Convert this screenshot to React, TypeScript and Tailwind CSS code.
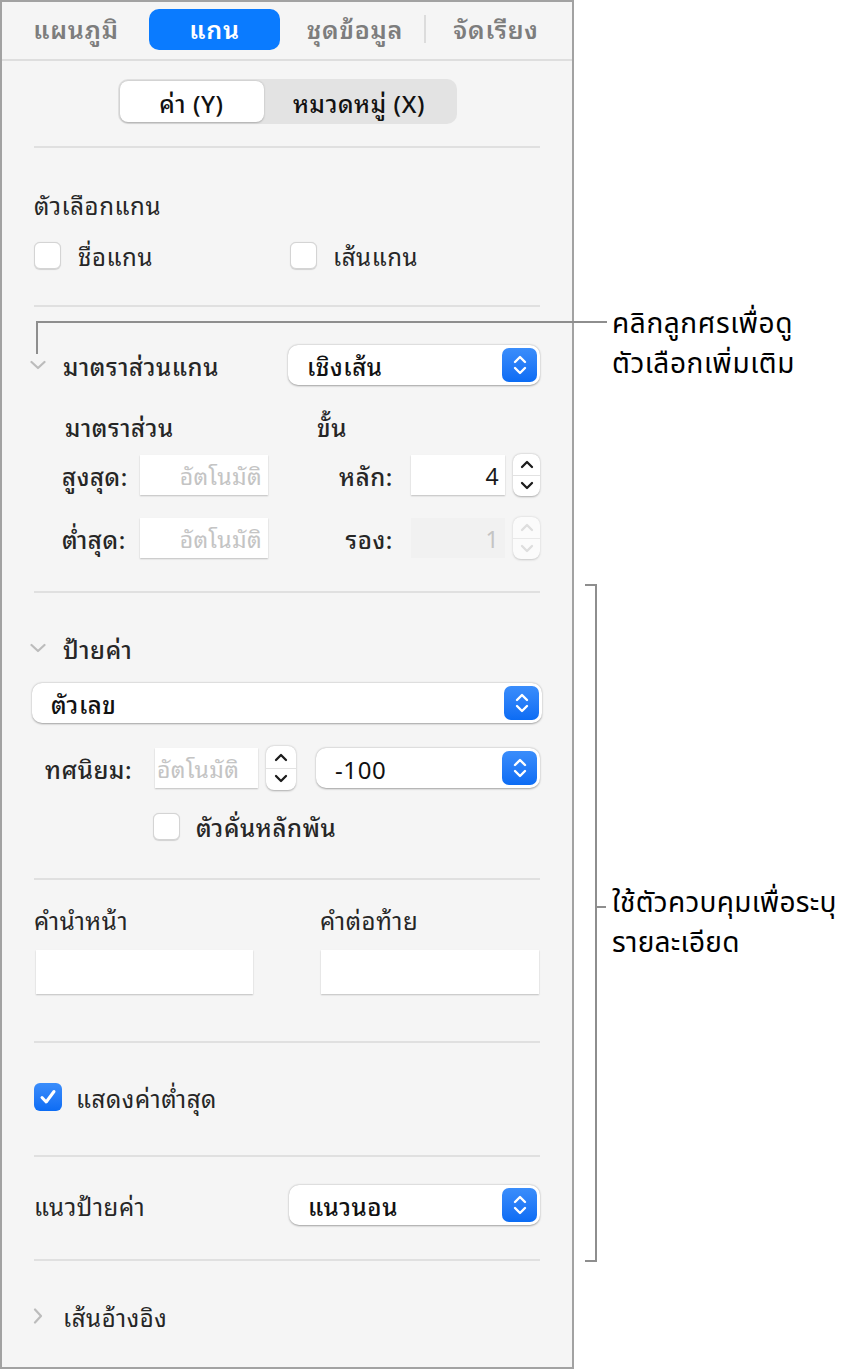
import React from 'react'

const THAI = "font-['Noto_Sans_Thai_Looped','Noto_Sans_Thai','Loma','Garuda','Noto_Sans',sans-serif]"
const THAI_NOTE = "font-['Noto_Sans_Thai','Noto_Sans_Thai_Looped','Garuda','Noto_Sans',sans-serif]"

function Divider({ className = '' }: { className?: string }) {
  return <div className={`mx-[32px] h-[2px] bg-[#e0e0e0] ${className}`} />
}

function Disclosure({ open = true }: { open?: boolean }) {
  return (
    <svg width="16" height="16" viewBox="0 0 16 16" className="shrink-0">
      {open ? (
        <path d="M1.5 5 L8 11 L14.5 5" fill="none" stroke="#bcbcbc" strokeWidth="2.2" strokeLinecap="round" strokeLinejoin="round" />
      ) : (
        <path d="M5 1.5 L11 8 L5 14.5" fill="none" stroke="#bcbcbc" strokeWidth="2.2" strokeLinecap="round" strokeLinejoin="round" />
      )}
    </svg>
  )
}

function BlueArrows() {
  return (
    <div className="flex h-[34px] w-[35px] items-center justify-center rounded-[7px] bg-gradient-to-b from-[#3a8dfb] to-[#0b6cf4]">
      <svg width="16" height="24" viewBox="0 0 16 24">
        <path d="M3 9 L8 4 L13 9" fill="none" stroke="white" strokeWidth="2.4" strokeLinecap="round" strokeLinejoin="round" />
        <path d="M3 15 L8 20 L13 15" fill="none" stroke="white" strokeWidth="2.4" strokeLinecap="round" strokeLinejoin="round" />
      </svg>
    </div>
  )
}

function Popup({ label, regular = false, className = '' }: { label: string; regular?: boolean; className?: string }) {
  return (
    <div className={`flex h-[40px] items-center justify-between rounded-[10px] bg-white pl-[19px] pr-[3px] shadow-[0_0.5px_2px_rgba(0,0,0,0.35)] ${className}`}>
      <span className={`text-[24px] text-[#111] ${regular ? 'font-normal' : 'font-medium'}`}>{label}</span>
      <BlueArrows />
    </div>
  )
}

function Stepper({ disabled = false, className = '' }: { disabled?: boolean; className?: string }) {
  const c = disabled ? '#cfcfcf' : '#1c1c1c'
  return (
    <div className={`flex flex-col rounded-[8px] bg-white shadow-[0_0.5px_2px_rgba(0,0,0,0.3)] ${disabled ? 'opacity-60' : ''} ${className}`}>
      <div className="flex flex-1 items-center justify-center border-b border-[#e2e2e2]">
        <svg width="14" height="10" viewBox="0 0 14 10">
          <path d="M2 8 L7 3 L12 8" fill="none" stroke={c} strokeWidth="2.3" strokeLinecap="round" strokeLinejoin="round" />
        </svg>
      </div>
      <div className="flex flex-1 items-center justify-center">
        <svg width="14" height="10" viewBox="0 0 14 10">
          <path d="M2 2 L7 7 L12 2" fill="none" stroke={c} strokeWidth="2.3" strokeLinecap="round" strokeLinejoin="round" />
        </svg>
      </div>
    </div>
  )
}

function Field({ value, placeholder = false, disabled = false, className = '' }: { value?: string; placeholder?: boolean; disabled?: boolean; className?: string }) {
  return (
    <div
      className={`flex h-[40px] items-center justify-end overflow-hidden pr-[6px] ${
        disabled ? 'bg-[#f1f1f1]' : 'bg-white shadow-[0_1px_1.5px_rgba(0,0,0,0.22)]'
      } ${className}`}
    >
      <span className={`whitespace-nowrap text-[23px] tracking-[0.4px] ${placeholder || disabled ? 'text-[#c4c4c4]' : 'text-[#1a1a1a]'}`}>{value}</span>
    </div>
  )
}

function Checkbox({ checked = false }: { checked?: boolean }) {
  if (checked) {
    return (
      <div className="flex h-[28px] w-[28px] shrink-0 items-center justify-center rounded-[6px] bg-gradient-to-b from-[#3a8dfb] to-[#0b6cf4]">
        <svg width="20" height="20" viewBox="0 0 20 20">
          <path d="M4 10.5 L8.2 15 L16 4.5" fill="none" stroke="white" strokeWidth="3" strokeLinecap="round" strokeLinejoin="round" />
        </svg>
      </div>
    )
  }
  return <div className="h-[27px] w-[27px] shrink-0 rounded-[6px] border border-[#d4d4d4] bg-white shadow-[0_0.5px_1px_rgba(0,0,0,0.15)]" />
}

export default function App() {
  return (
    <div className={`relative h-[1370px] w-[854px] overflow-hidden bg-white ${THAI}`}>
      <div className="flex h-[1369px] w-[574px] flex-col border-2 border-[#a2a2a2] bg-[#f5f5f5] text-[24px] tracking-[0.6px] text-[#262626]">
        {/* Tab bar */}
        <div className="flex h-[59px] shrink-0 items-center border-b-2 border-[#dedede] pb-[3px] pl-[10px] text-[25px] font-semibold tracking-[0.8px] text-[#7d7d7d]">
          <div className="w-[128px] text-center">แผนภูมิ</div>
          <div className="ml-[9px] flex h-[41px] w-[131px] items-center justify-center rounded-[10px] bg-[#0a7bff] text-white">แกน</div>
          <div className="ml-[10px] w-[130px] text-center">ชุดข้อมูล</div>
          <div className="ml-[4px] h-[28px] w-[2px] bg-[#dcdcdc]" />
          <div className="ml-[5px] w-[130px] text-center">จัดเรียง</div>
        </div>

        {/* Segmented control */}
        <div className="mt-[18px] flex justify-center">
          <div className="flex h-[45px] w-[339px] items-center rounded-[10px] bg-[#e3e3e3] p-[2px]">
            <div className="flex h-[41px] w-[144px] items-center justify-center rounded-[8px] bg-white font-medium text-[#111] shadow-[0_0.5px_2px_rgba(0,0,0,0.25)]">
              ค่า (Y)
            </div>
            <div className="flex h-[41px] flex-1 items-center justify-center font-medium text-[#111]">หมวดหมู่ (X)</div>
          </div>
        </div>

        <Divider className="mt-[22px]" />

        {/* Axis options */}
        <div className="mt-[38px] flex h-[36px] items-center px-[32px]">ตัวเลือกแกน</div>
        <div className="mt-[15px] flex h-[36px] items-center px-[32px]">
          <div className="flex w-[256px] items-center gap-[17px]">
            <Checkbox />
            <span>ชื่อแกน</span>
          </div>
          <div className="flex items-center gap-[16px]">
            <Checkbox />
            <span>เส้นแกน</span>
          </div>
        </div>

        <Divider className="mt-[32px]" />

        {/* Axis scale */}
        <div className="mt-[38px] flex h-[40px] items-center px-[32px]">
          <div className="flex w-[254px] items-center">
            <div className="ml-[-4px]"><Disclosure /></div>
            <span className="ml-[17px] font-medium">มาตราส่วนแกน</span>
          </div>
          <Popup label="เชิงเส้น" className="flex-1" />
        </div>
        <div className="mt-[23px] flex h-[36px] items-center pl-[63px] font-medium">
          <span className="w-[252px]">มาตราส่วน</span>
          <span>ขั้น</span>
        </div>
        <div className="mt-[11px] flex h-[40px] items-center pl-[60px] pr-[32px]">
          <span className="w-[78px] font-medium">สูงสุด:</span>
          <Field value="อัตโนมัติ" placeholder className="w-[128px]" />
          <span className="w-[143px] pr-[18px] text-right font-medium">หลัก:</span>
          <Field value="4" className="w-[94px]" />
          <Stepper className="ml-[8px] h-[42px] w-[27px]" />
        </div>
        <div className="mt-[23px] flex h-[40px] items-center pl-[60px] pr-[32px]">
          <span className="w-[78px] font-medium">ต่ำสุด:</span>
          <Field value="อัตโนมัติ" placeholder className="w-[128px]" />
          <span className="w-[143px] pr-[18px] text-right font-medium">รอง:</span>
          <Field value="1" disabled className="w-[94px]" />
          <Stepper disabled className="ml-[8px] h-[42px] w-[27px]" />
        </div>

        <Divider className="mt-[33px]" />

        {/* Value labels */}
        <div className="mt-[37px] flex h-[36px] items-center px-[32px]">
          <div className="ml-[-4px]"><Disclosure /></div>
          <span className="ml-[17px] font-medium">ป้ายค่า</span>
        </div>
        <div className="mt-[17px] px-[30px]">
          <Popup label="ตัวเลข" />
        </div>
        <div className="mt-[25px] flex h-[40px] items-center pl-[43px] pr-[32px]">
          <span className="w-[110px] font-medium">ทศนิยม:</span>
          <Field value="อัตโนมัติ" placeholder className="w-[103px] !justify-start !pl-[2px]" />
          <Stepper className="ml-[8px] h-[44px] w-[30px]" />
          <Popup label="-100" regular className="ml-[20px] flex-1" />
        </div>
        <div className="mt-[20px] flex h-[36px] items-center gap-[16px] pl-[151px]">
          <Checkbox />
          <span className="font-medium">ตัวคั่นหลักพัน</span>
        </div>

        <Divider className="mt-[34px]" />

        {/* Prefix / suffix */}
        <div className="mt-[21px] flex h-[36px] items-center px-[32px]">
          <span className="w-[286px]">คำนำหน้า</span>
          <span>คำต่อท้าย</span>
        </div>
        <div className="mt-[13px] flex items-center pl-[34px] pr-[33px]">
          <div className="h-[44px] w-[217px] bg-white shadow-[0_1px_1.5px_rgba(0,0,0,0.22)]" />
          <div className="ml-[68px] h-[44px] w-[218px] bg-white shadow-[0_1px_1.5px_rgba(0,0,0,0.22)]" />
        </div>

        <Divider className="mt-[47px]" />

        <div className="mt-[36px] flex h-[36px] items-center gap-[14px] px-[32px]">
          <Checkbox checked />
          <span>แสดงค่าต่ำสุด</span>
        </div>

        <Divider className="mt-[40px]" />

        <div className="mt-[28px] flex h-[40px] items-center px-[32px]">
          <span className="w-[255px]">แนวป้ายค่า</span>
          <Popup label="แนวนอน" className="flex-1" />
        </div>

        <Divider className="mt-[34px]" />

        <div className="mt-[37px] flex h-[36px] items-center px-[32px]">
          <div className="ml-[-4px]"><Disclosure open={false} /></div>
          <span className="ml-[17px]">เส้นอ้างอิง</span>
        </div>
      </div>

      {/* Callout: disclosure arrow */}
      <div className="absolute left-[36px] top-[321px] h-[2px] w-[571px] bg-[#8e8e8e]" />
      <div className="absolute left-[36px] top-[321px] h-[33px] w-[2px] bg-[#8e8e8e]" />
      <div className={`absolute left-[612px] top-[305px] text-[28px] leading-[40px] tracking-[0.6px] text-black ${THAI_NOTE}`}>
        <div>คลิกลูกศรเพื่อดู</div>
        <div>ตัวเลือกเพิ่มเติม</div>
      </div>

      {/* Bracket: detail controls */}
      <div className="absolute left-[585px] top-[584px] h-[2px] w-[12px] bg-[#8e8e8e]" />
      <div className="absolute left-[595px] top-[584px] h-[678px] w-[2px] bg-[#8e8e8e]" />
      <div className="absolute left-[585px] top-[1260px] h-[2px] w-[12px] bg-[#8e8e8e]" />
      <div className="absolute left-[595px] top-[906px] h-[2px] w-[11px] bg-[#8e8e8e]" />
      <div className={`absolute left-[612px] top-[884px] text-[28px] leading-[40px] tracking-[0.3px] text-black ${THAI_NOTE}`}>
        <div>ใช้ตัวควบคุมเพื่อระบุ</div>
        <div>รายละเอียด</div>
      </div>
    </div>
  )
}
